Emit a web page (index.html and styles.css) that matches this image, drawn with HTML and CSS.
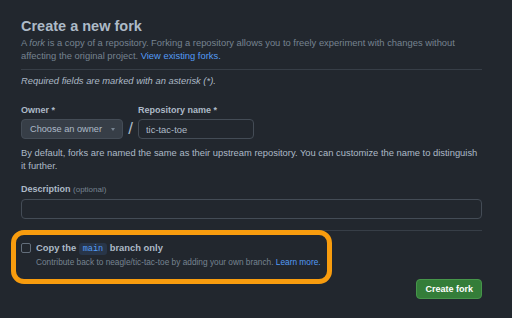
FILE: index.html
```html
<!DOCTYPE html>
<html lang="en">
<head>
  <meta charset="UTF-8">
  <title>Create a new fork</title>
  <link rel="stylesheet" href="styles.css">
</head>
<body>
  <main class="fork">
    <h1>Create a new fork</h1>
    <p class="lead">A <em>fork</em> is a copy of a repository. Forking a repository allows you to freely experiment with changes without affecting the original project. <a href="#">View existing forks.</a></p>
    <div class="divider"></div>
    <p class="note">Required fields are marked with an asterisk (*).</p>

    <div class="name-row">
      <div class="field">
        <label class="label">Owner *</label>
        <button class="select" type="button">Choose an owner <span class="caret"></span></button>
      </div>
      <span class="slash">/</span>
      <div class="field">
        <label class="label">Repository name *</label>
        <input class="input repo" type="text" value="tic-tac-toe">
      </div>
    </div>
    <p class="hint">By default, forks are named the same as their upstream repository. You can customize the name to distinguish it further.</p>

    <label class="label desc-label">Description <span class="optional">(optional)</span></label>
    <input class="input wide" type="text">
    <div class="divider bottom"></div>

    <!-- highlighted option -->
    <div class="branch-opt">
      <span class="check"></span>
      <div>
        <div class="opt-title">Copy the <code>main</code> branch only</div>
        <div class="opt-sub">Contribute back to neagle/tic-tac-toe by adding your own branch. <a href="#">Learn more.</a></div>
      </div>
    </div>

    <div class="actions">
      <button class="btn-create" type="button">Create fork</button>
    </div>
  </main>
</body>
</html>
```

FILE: styles.css
```css
body {
  margin: 0;
  background-color: #22272e;
  color: #adbac7;
  font-family: "Liberation Sans", Arial, sans-serif;
}
.fork {
  width: 461px;
  padding: 17px 0 0 21px;
}
h1 {
  margin: 0;
  font-size: 14.5px;
  line-height: 18px;
  font-weight: bold;
}
.lead {
  margin: 1px 0 0;
  font-size: 9.4px;
  line-height: 13px;
  color: #768390;
}
.lead a,
.opt-sub a {
  color: #539bf5;
  text-decoration: none;
}
.divider {
  height: 1px;
  margin-top: 7px;
  background-color: #373e47;
}
.divider.bottom {
  margin-top: 11px;
}
.note {
  margin: 4px 0 0;
  font-size: 9.4px;
  line-height: 13px;
  font-style: italic;
}
.name-row {
  display: flex;
  align-items: flex-end;
  margin-top: 17px;
}
.field {
  display: flex;
  flex-direction: column;
  gap: 3px;
}
.label {
  display: block;
  font-size: 9px;
  line-height: 12px;
  font-weight: bold;
}
.optional {
  font-weight: normal;
  font-size: 8px;
  color: #768390;
}
.select {
  display: flex;
  align-items: center;
  justify-content: space-between;
  width: 102px;
  height: 20px;
  padding: 0 7px 0 8px;
  box-sizing: border-box;
  background-color: #373e47;
  border: 1px solid #444c56;
  border-radius: 4px;
  color: #adbac7;
  font-family: inherit;
  font-size: 9.2px;
}
.caret {
  width: 0;
  height: 0;
  border-left: 2.5px solid transparent;
  border-right: 2.5px solid transparent;
  border-top: 3px solid #768390;
}
.slash {
  width: 15px;
  text-align: center;
  font-size: 17px;
  line-height: 20px;
}
.input {
  height: 20px;
  box-sizing: border-box;
  padding: 0 7px;
  background-color: #22272e;
  border: 1px solid #444c56;
  border-radius: 4px;
  color: #adbac7;
  font-family: inherit;
  font-size: 9.4px;
}
.repo {
  width: 116px;
}
.wide {
  display: block;
  width: 461px;
  margin-top: 3px;
}
.hint {
  margin: 7px 0 0;
  font-size: 9.4px;
  line-height: 13px;
}
.desc-label {
  margin-top: 11px;
}
.branch-opt {
  display: inline-flex;
  gap: 5px;
  margin-top: 9px;
  padding: 1px 1px 5px 0;
  border-radius: 3px;
  outline: 5px solid #f89c0e;
  outline-offset: 5px;
}
.check {
  flex: none;
  width: 10px;
  height: 10px;
  margin-top: 2px;
  box-sizing: border-box;
  border: 1px solid #636e7b;
  border-radius: 2px;
}
.opt-title {
  font-size: 9.4px;
  line-height: 13px;
  font-weight: bold;
}
code {
  padding: 1px 4px;
  border-radius: 3px;
  background-color: #283548;
  color: #539bf5;
  font-family: "Liberation Mono", monospace;
  font-size: 8.5px;
  font-weight: normal;
}
.opt-sub {
  font-size: 8.3px;
  line-height: 13px;
  color: #768390;
}
.actions {
  display: flex;
  justify-content: flex-end;
  margin-top: 5px;
}
.btn-create {
  height: 20px;
  padding: 0 8px;
  background-color: #347d39;
  border: 1px solid #46954a;
  border-radius: 4px;
  color: #ffffff;
  font-family: inherit;
  font-size: 9px;
  font-weight: bold;
}
```
